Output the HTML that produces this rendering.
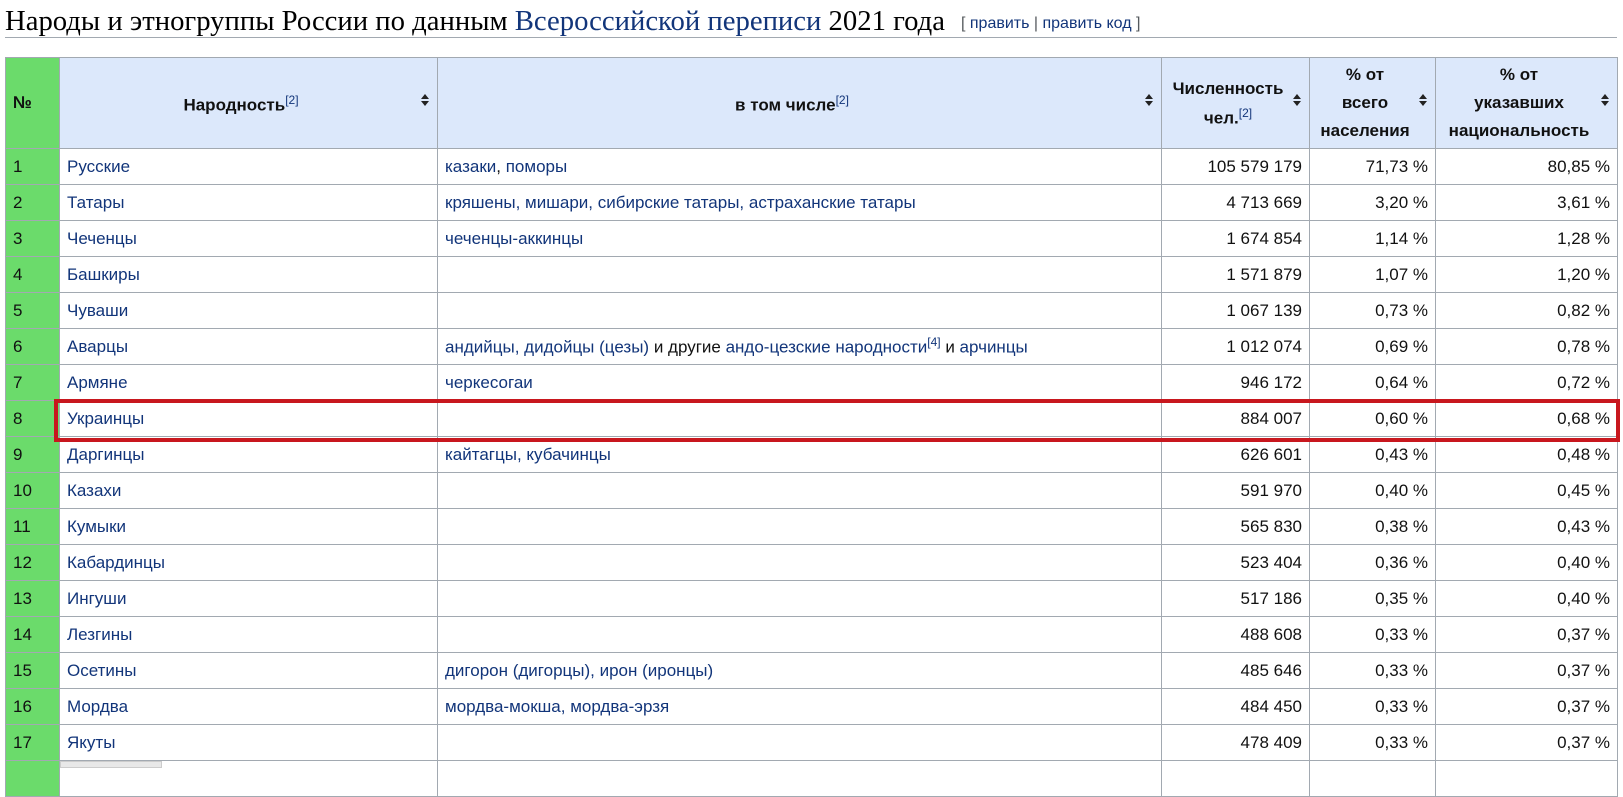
<!DOCTYPE html>
<html><head><meta charset="utf-8"><style>
body{margin:0;width:1623px;height:766px;overflow:hidden;background:#fff;font-family:"Liberation Sans",Arial,sans-serif;position:relative}
h2{position:absolute;left:5px;top:5px;margin:0;font-family:"Liberation Serif",serif;font-weight:normal;font-size:28.7px;color:#000;white-space:nowrap;line-height:32px}
h2 a{color:#12357a}
h2 .ed{font-family:"Liberation Sans",sans-serif;font-size:16px;color:#54595d;margin-left:16px;vertical-align:2px}
h2 .ed a{color:#12357a}
.hr{position:absolute;left:5px;top:37px;width:1612px;height:1px;background:#a2a9b1}
table{position:absolute;left:5px;top:57px;width:1612px;border-collapse:collapse;table-layout:fixed;font-size:17px}
td,th{border:1px solid #a2a9b1;padding:0 7px;height:35px;white-space:nowrap;color:#111;overflow:hidden}
th{background:#dce8fb;font-weight:bold;height:90px;position:relative;line-height:28px;white-space:normal;padding-right:22px}
th.n{background:#6bdb6b;text-align:left;padding-right:7px}
td.n{background:#6bdb6b}
td a,th sup{color:#12357a}
td.r{text-align:right}
.s{position:absolute;right:8px;top:36px;width:8px;height:14px}
.s:before,.s:after{content:"";position:absolute;left:0;border-left:4px solid transparent;border-right:4px solid transparent}
.s:before{top:0;border-bottom:5px solid #222}
.s:after{top:7px;border-top:5px solid #222}
sup{font-size:12px;font-weight:normal}
.red{position:absolute;left:54px;top:399px;width:1558px;height:35px;border:4px solid #c8171e}
.bot{position:absolute;left:60px;top:761px;width:100px;height:5px;background:#e8e8e8;border:1px solid #ccc}
</style></head><body>
<h2>Народы и этногруппы России по данным <a>Всероссийской переписи</a> 2021 года<span class="ed">[ <a>править</a> | <a>править код</a> ]</span></h2>
<div class="hr"></div>
<table>
<colgroup><col style="width:54px"><col style="width:378px"><col style="width:724px"><col style="width:148px"><col style="width:126px"><col style="width:182px"></colgroup>
<tr><th class="n">№</th><th>Народность<sup>[2]</sup><span class="s"></span></th><th>в том числе<sup>[2]</sup><span class="s"></span></th><th style="line-height:25px">Численность чел.<sup>[2]</sup><span class="s"></span></th><th>% от<br>всего<br>населения<span class="s"></span></th><th>% от<br>указавших<br>национальность<span class="s"></span></th></tr>
<tr><td class="n">1</td><td><a>Русские</a></td><td><a>казаки</a>, <a>поморы</a></td><td class="r">105 579 179</td><td class="r">71,73 %</td><td class="r">80,85 %</td></tr>
<tr><td class="n">2</td><td><a>Татары</a></td><td><a>кряшены, мишари, сибирские татары, астраханские татары</a></td><td class="r">4 713 669</td><td class="r">3,20 %</td><td class="r">3,61 %</td></tr>
<tr><td class="n">3</td><td><a>Чеченцы</a></td><td><a>чеченцы-аккинцы</a></td><td class="r">1 674 854</td><td class="r">1,14 %</td><td class="r">1,28 %</td></tr>
<tr><td class="n">4</td><td><a>Башкиры</a></td><td></td><td class="r">1 571 879</td><td class="r">1,07 %</td><td class="r">1,20 %</td></tr>
<tr><td class="n">5</td><td><a>Чуваши</a></td><td></td><td class="r">1 067 139</td><td class="r">0,73 %</td><td class="r">0,82 %</td></tr>
<tr><td class="n">6</td><td><a>Аварцы</a></td><td><a>андийцы, дидойцы (цезы)</a> и другие <a>андо-цезские народности</a><sup style="color:#12357a">[4]</sup> и <a>арчинцы</a></td><td class="r">1 012 074</td><td class="r">0,69 %</td><td class="r">0,78 %</td></tr>
<tr><td class="n">7</td><td><a>Армяне</a></td><td><a>черкесогаи</a></td><td class="r">946 172</td><td class="r">0,64 %</td><td class="r">0,72 %</td></tr>
<tr><td class="n">8</td><td><a>Украинцы</a></td><td></td><td class="r">884 007</td><td class="r">0,60 %</td><td class="r">0,68 %</td></tr>
<tr><td class="n">9</td><td><a>Даргинцы</a></td><td><a>кайтагцы, кубачинцы</a></td><td class="r">626 601</td><td class="r">0,43 %</td><td class="r">0,48 %</td></tr>
<tr><td class="n">10</td><td><a>Казахи</a></td><td></td><td class="r">591 970</td><td class="r">0,40 %</td><td class="r">0,45 %</td></tr>
<tr><td class="n">11</td><td><a>Кумыки</a></td><td></td><td class="r">565 830</td><td class="r">0,38 %</td><td class="r">0,43 %</td></tr>
<tr><td class="n">12</td><td><a>Кабардинцы</a></td><td></td><td class="r">523 404</td><td class="r">0,36 %</td><td class="r">0,40 %</td></tr>
<tr><td class="n">13</td><td><a>Ингуши</a></td><td></td><td class="r">517 186</td><td class="r">0,35 %</td><td class="r">0,40 %</td></tr>
<tr><td class="n">14</td><td><a>Лезгины</a></td><td></td><td class="r">488 608</td><td class="r">0,33 %</td><td class="r">0,37 %</td></tr>
<tr><td class="n">15</td><td><a>Осетины</a></td><td><a>дигорон (дигорцы), ирон (иронцы)</a></td><td class="r">485 646</td><td class="r">0,33 %</td><td class="r">0,37 %</td></tr>
<tr><td class="n">16</td><td><a>Мордва</a></td><td><a>мордва-мокша, мордва-эрзя</a></td><td class="r">484 450</td><td class="r">0,33 %</td><td class="r">0,37 %</td></tr>
<tr><td class="n">17</td><td><a>Якуты</a></td><td></td><td class="r">478 409</td><td class="r">0,33 %</td><td class="r">0,37 %</td></tr>
<tr><td class="n"></td><td></td><td></td><td></td><td></td><td></td></tr>
</table>
<div class="red"></div>
<div class="bot"></div>
</body></html>
